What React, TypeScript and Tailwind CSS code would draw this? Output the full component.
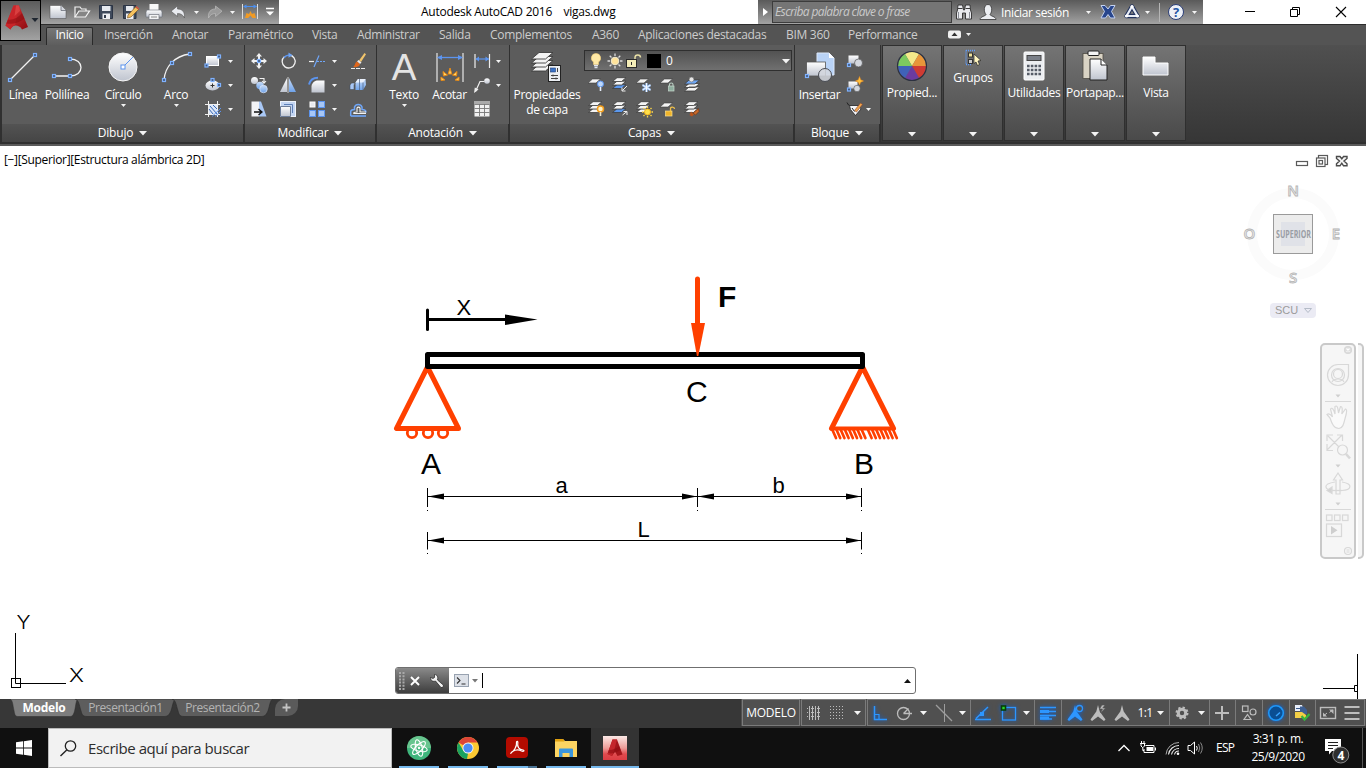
import React from 'react';

type P = { children?: React.ReactNode; w?: number; h?: number; cls?: string };

const I = ({ children, w = 16, h = 16, cls = '' }: P) => (
  <svg width={w} height={h} viewBox={`0 0 ${w} ${h}`} fill="none" className={`shrink-0 overflow-visible ${cls}`}>
    {children}
  </svg>
);

const Grip = ({ x, y }: { x: number; y: number }) => (
  <rect x={x - 1.5} y={y - 1.5} width="3" height="3" fill="#40577c" stroke="#7fb2ff" strokeWidth="1.2" />
);

const Down = ({ w = 8, c = '#f4f4f4' }: { w?: number; c?: string }) => (
  <I w={w} h={Math.ceil(w / 2)}>
    <path d={`M0 0H${w}L${w / 2} ${w / 2 + 0.6}Z`} fill={c} />
  </I>
);

const Defs = () => (
  <svg width="0" height="0" className="absolute">
    <defs>
      <linearGradient id="metal" x1="0" y1="0" x2="0" y2="1">
        <stop offset="0" stopColor="#ffffff" />
        <stop offset="1" stopColor="#bfc4cf" />
      </linearGradient>
      <linearGradient id="ice" x1="0" y1="0" x2="0" y2="1">
        <stop offset="0" stopColor="#c9dcf7" />
        <stop offset="1" stopColor="#6fa3ea" />
      </linearGradient>
      <linearGradient id="ruby" x1="0" y1="0" x2="1" y2="1">
        <stop offset="0" stopColor="#e63a3d" />
        <stop offset="1" stopColor="#8d0b10" />
      </linearGradient>
      <linearGradient id="rubyTile" x1="0" y1="0" x2="0" y2="1">
        <stop offset="0" stopColor="#fbe9e6" />
        <stop offset="0.5" stopColor="#ee9c98" />
        <stop offset="0.75" stopColor="#e04a4e" />
        <stop offset="1" stopColor="#dc3d43" />
      </linearGradient>
    </defs>
  </svg>
);

/* ---------- title bar ---------- */

const Logo = () => (
  <div className="flex h-[41px] w-[41px] shrink-0 items-start border border-black bg-linear-to-b from-[#5c5c5c] to-[#a2a2a2] pt-[4px] pl-[4px]">
    <I w={34} h={28}>
      <path d="M8.500 .500H14L23 22L17 24.500C15.500 21.500 13 20.500 10.500 20.500C8 20.500 6.500 22.500 5.500 24.500L.500 20.500Z" fill="url(#ruby)" />
      <path d="M8.500 .500L.500 20.500L5.500 24.500C6.500 22 8 20.500 10 20.500L14 .500Z" fill="#c9252a" />
      <path d="M3 14.500C8 15.500 14 12 17 8L19.500 13.500C14.500 18 7 19.500 1.500 18.500Z" fill="#86090e" opacity=".5" />
      <path d="M11 .500L9.500 11L15 6L14 .500Z" fill="#f0605c" opacity=".45" />
      <path d="M26.500 13H33.500L30 17Z" fill="#1f2630" />
    </I>
  </div>
);

const QuickAccess = () => (
  <div className="flex h-[24px] w-[238px] shrink-0 items-center bg-linear-to-b from-[#5a5a5a] to-[#a3a3a3] pl-[9px]">
    <div className="flex w-[24px]"><I><path d="M0 1.500H11L16 6.500V14.500H0Z" fill="url(#metal)" stroke="#4a4a4a" strokeWidth=".5" /><path d="M11 1.500V6.500H16" fill="#d5d8df" stroke="#6b6f78" strokeWidth=".8" /></I></div>
    <div className="flex w-[25px]"><I><path d="M1 13V3H6L7.500 5H12V7" stroke="#f0f0f0" strokeWidth="1.200" fill="#6d6d6d" /><path d="M1 13L5 7H15.500L11.500 13Z" stroke="#f4f4f4" strokeWidth="1.200" fill="#858585" /></I></div>
    <div className="flex w-[24px] pb-px"><I cls="-ml-px"><path d="M1.500 1.500H14.500V14.500H1.500Z" fill="#3f4a5c" stroke="#2b3444" /><rect x="4" y="2" width="8.500" height="5" fill="#e6e9ee" /><path d="M4.500 9.500H12V15H4.500Z" fill="#eef0f4" /><rect x="6" y="11" width="2" height="3" fill="#333d4e" /></I></div>
    <div className="flex w-[24px] pb-px"><I><path d="M.500 1.500H13V14.500H.500Z" fill="#3f4a5c" stroke="#2b3444" /><rect x="3" y="2" width="7.500" height="5" fill="#e6e9ee" /><path d="M3 9.500H10.500V15H3Z" fill="#eef0f4" /><path d="M5 11L12.500 3L15.500 5.500L8 13L4.500 14Z" fill="#f6c25e" stroke="#71491d" strokeWidth=".6" /><path d="M12.500 3L13.500 2L16.200 4.500L15.500 5.500Z" fill="#d95241" /></I></div>
    <div className="flex w-[25px]"><I cls="-ml-px"><path d="M3.500 0H12.500V6H3.500Z" fill="#f8f8f8" /><path d="M1 6H15L16 8V13H0V8Z" fill="url(#metal)" stroke="#6a6f78" strokeWidth=".6" /><path d="M3 10.500H13V15.500H3Z" fill="#f2f3f5" stroke="#72767f" strokeWidth=".7" /><path d="M5 13H11" stroke="#888" /></I></div>
    <div className="flex w-[22px]"><I w={14} cls="-ml-px"><path d="M6.500 2V5C11.500 5 14 8 13.500 14C12 11 10 9.500 6.500 9.500V12.500L0 7.200Z" fill="#e8eaef" stroke="#555" strokeWidth=".6" /></I></div>
    <div className="flex w-[15px]"><Down w={5} /></div>
    <div className="flex w-[21px]"><I w={14} cls="-ml-px"><path d="M7.500 2V5C2.500 5 0 8 .500 14C2 11 4 9.500 7.500 9.500V12.500L14 7.200Z" fill="#9a9a9a" stroke="#bcbcbc" strokeWidth=".7" /></I></div>
    <div className="flex w-[14px]"><Down w={5} /></div>
    <div className="flex w-[23px]"><I cls="-ml-[2px]"><path d="M.500 0V15M15.500 0V15" stroke="#dcdcdc" /><path d="M2 2.500H14.500" stroke="#4c8fef" /><path d="M1 2.500L4.500 .500V4.500ZM15 2.500L11.500 .500V4.500Z" fill="#4c8fef" /><path d="M3 14L4.500 9L7 10L8.500 7L10 10L12.500 9L14 14H10.500L8.500 11.500L6 14Z" fill="#f29a22" /></I></div>
    <I w={8} h={10} cls="-ml-px"><path d="M0 1.500H8" stroke="#fff" strokeWidth="1.500" /><path d="M0 4.500H8L4 8.500Z" fill="#fff" /></I>
  </div>
);

const InfoCenter = () => (
  <div className="flex h-[24px] w-[445px] shrink-0 items-center bg-linear-to-b from-[#5a5a5a] to-[#a3a3a3]">
    <div className="flex w-[14px] justify-center"><I w={5} h={8}><path d="M0 0L5 4L0 8Z" fill="#fff" /></I></div>
    <div className="flex h-[22px] w-[180px] items-center border border-[#3c3c3c] bg-[#757575] pl-[2px] text-[12px] tracking-[-0.62px] text-[#c9c9c9] italic">Escriba palabra clave o frase</div>
    <div className="ml-[4px] flex w-[24px]"><I><path d="M2 1H6.500L7.500 6H8.500L9.500 1H14L14.500 6L15.500 9V15H9.500V9H6.500V15H.500V9L1.500 6Z" fill="#e9eaee" stroke="#2e2e2e" strokeWidth=".9" /><path d="M2 4.500H6.500M9.500 4.500H14" stroke="#3b3b3b" /><path d="M2.500 8V14M13.500 8V14" stroke="#8a8d96" /></I></div>
    <div className="flex w-[21px]"><I><path d="M0 15.500C0 12.500 6 12 6 10.500C3.500 8 3.500 0.500 8 .500S12.500 8 10 10.500C10 12 16 12.500 16 15.500Z" fill="#eceef2" stroke="#333" strokeWidth=".8" /></I></div>
    <div className="w-[85px] pt-[2px] text-[12px] tracking-[-0.36px] whitespace-nowrap text-white">Iniciar sesión</div>
    <div className="flex w-[14px]"><Down w={5} /></div>
    <div className="flex w-[24px]"><I><path d="M1 1.500H5L8 5L10.500 1.500H15L11.500 7.500L15 14H10.500L8 10.500L5.500 14H1L4.500 7.500Z" fill="#28468d" stroke="#c4d2f0" strokeWidth="1" /></I></div>
    <div className="flex w-[21px]"><I><path d="M8 2.500L2.500 12H13.500Z" fill="none" stroke="#24345f" strokeWidth="4.400" strokeLinejoin="round" /><path d="M8 2.500L2.500 12H13.500Z" stroke="#e8edf7" strokeWidth="2.200" strokeLinejoin="round" /><circle cx="8" cy="2.500" r="1.600" fill="#fff" /><circle cx="2.500" cy="12" r="1.600" fill="#fff" /><circle cx="13.500" cy="12" r="1.600" fill="#fff" /></I></div>
    <div className="flex w-[14px]"><Down w={5} /></div>
    <div className="h-[19px] w-[9px] border-l border-[#b5b5b5]" />
    <div className="flex h-[16px] w-[16px] items-center justify-center rounded-full border border-[#2c3f78] bg-[#eef1f7] text-[13px] leading-none font-bold text-[#2555a5]">?</div>
    <div className="ml-[8px] flex"><Down w={5} /></div>
  </div>
);

const WindowControls = () => (
  <div className="flex flex-1 items-center bg-white pl-[42px]">
    <div className="flex w-[45px]"><I w={10} h={10}><path d="M0 4.500H10" stroke="#000" /></I></div>
    <div className="flex w-[46px]"><I w={10} h={10}><path d="M.500 2.500H7.500V9.500H.500ZM2.500 2.500V.500H9.500V7.500H7.500" stroke="#000" /></I></div>
    <I w={10} h={10}><path d="M0 0L10 10M10 0L0 10" stroke="#000" strokeWidth="1.100" /></I>
  </div>
);

const TabLabel = ({ children, cls }: { children: string; cls: string }) => (
  <div className={`shrink-0 whitespace-nowrap ${cls}`}>{children}</div>
);

const Tabs = () => (
  <div className="flex h-[21px] items-end border-t border-[#2c2c2c] bg-[#545454] pl-[5px] text-[12px] leading-[17px] tracking-[-0.3px] text-[#cdcdcd]">
    <div className="flex h-[18px] w-[47px] shrink-0 items-center justify-center rounded-t-[2px] border border-b-0 border-[#2a2a2a] bg-linear-to-b from-[#777] to-[#5e5e5e] pb-[4px] text-white">Inicio</div>
    <div className="flex items-center pb-[2px] pl-[11px]">
      <TabLabel cls="w-[68px]">Inserción</TabLabel>
      <TabLabel cls="w-[56px]">Anotar</TabLabel>
      <TabLabel cls="w-[84px]">Paramétrico</TabLabel>
      <TabLabel cls="w-[45px]">Vista</TabLabel>
      <TabLabel cls="w-[82px]">Administrar</TabLabel>
      <TabLabel cls="w-[51px]">Salida</TabLabel>
      <TabLabel cls="w-[102px]">Complementos</TabLabel>
      <TabLabel cls="w-[46px]">A360</TabLabel>
      <TabLabel cls="w-[148px]">Aplicaciones destacadas</TabLabel>
      <TabLabel cls="w-[62px]">BIM 360</TabLabel>
      <TabLabel cls="w-[99px]">Performance</TabLabel>
      <I w={24} h={9}><rect x="1" y=".500" width="13" height="8" rx="2" fill="#f0f0f0" /><path d="M4.500 6L7.500 2.500L10.500 6Z" fill="#333" /><path d="M19 3H24L21.500 6Z" fill="#f0f0f0" /></I>
    </div>
  </div>
);

/* ---------- ribbon ---------- */

const Panel = ({ title, cls, children }: { title: string; cls: string; children: React.ReactNode }) => (
  <div className={`flex h-[97px] shrink-0 flex-col border-r border-[#303030] ${cls}`}>
    <div className="flex h-[79px] bg-[#5c5c5c]">{children}</div>
    <div className="mr-px flex h-[18px] items-center justify-center gap-[6px] bg-linear-to-b from-[#535353] to-[#454545] pb-px text-[12px] tracking-[-0.2px] text-white">
      {title}
      <Down />
    </div>
  </div>
);

const Big = ({ label, cls, arrow, icon }: { label: React.ReactNode; cls: string; arrow?: boolean; icon: React.ReactNode }) => (
  <div className={`flex shrink-0 flex-col items-center pt-[6px] text-center text-[12px] leading-[15px] tracking-[-0.3px] whitespace-nowrap text-white ${cls}`}>
    {icon}
    <div className="mt-[4px] mb-[2px]">{label}</div>
    {arrow && <Down w={5} />}
  </div>
);

const Row = ({ children, arrow }: { children: React.ReactNode; arrow?: string }) => (
  <div className="flex h-[24px] items-center">
    {children}
    {arrow && <div className={`flex ${arrow}`}><Down w={5} /></div>}
  </div>
);

const Dibujo = () => (
  <Panel title="Dibujo" cls="w-[243px]">
    <Big cls="w-[42px]" label="Línea" icon={<I w={32} h={32}><path d="M3 29L28 4" stroke="#f2f2f2" strokeWidth="1.200" /><Grip x={3} y={29} /><Grip x={28} y={4} /></I>} />
    <Big cls="w-[46px]" label="Polilínea" icon={<I w={32} h={32}><path d="M3 25H19C26 25 30 21 30 16.500S26 8 19 8" stroke="#f2f2f2" strokeWidth="1.300" /><Grip x={3} y={25} /><Grip x={19} y={25} /><Grip x={19} y={8} /></I>} />
    <Big cls="w-[66px]" arrow label="Círculo" icon={<I w={32} h={32}><circle cx="16" cy="16" r="14" fill="url(#metal)" stroke="#f7f7f7" /><path d="M16 16L26 6" stroke="#5c94ee" /><rect x="14" y="14" width="4" height="4" fill="#fff" stroke="#5c94ee" /></I>} />
    <Big cls="w-[40px]" arrow label="Arco" icon={<I w={32} h={32}><path d="M4 29C5 16 14 5 30 3" stroke="#f2f2f2" strokeWidth="1.300" /><Grip x={4} y={29} /><Grip x={12} y={12} /><Grip x={30} y={3} /></I>} />
    <div className="ml-[9px] pt-[4px]">
      <Row arrow="ml-[7px]"><I><rect x="1.500" y="3.500" width="12" height="9" fill="url(#metal)" stroke="#fff" /><Grip x={1.5} y={12.5} /><Grip x={14} y={3.5} /></I></Row>
      <Row arrow="ml-[7px]"><I><ellipse cx="7.500" cy="8.500" rx="7" ry="5" fill="url(#metal)" /><path d="M5.500 8.500H9.500M7.500 6.500V10.500" stroke="#333" /><Grip x={7.5} y={3} /><Grip x={14} y={8} /></I></Row>
      <Row arrow="ml-[7px]"><I><path d="M0 3.500H15M0 13.500H15M3.500 0V16M12.500 0V16" stroke="#f0f0f0" /><rect x="4" y="4" width="8" height="9" fill="#dbe6f8" /><path d="M4 8L8 13M5 5L12 13M8 4L12 8" stroke="#3a69b4" /><path d="M7 15.500L16 7M10 15.500L16 10" stroke="#5c94ee" /></I></Row>
    </div>
  </Panel>
);

const Modificar = () => (
  <Panel title="Modificar" cls="w-[132px]">
    <div className="ml-[6px] w-[29px] pt-[4px]">
      <Row><I><path d="M8 0L11 3.500H9V6H7V3.500H5ZM8 16L5 12.500H7V10H9V12.500H11ZM0 8L3.500 5V7H6V9H3.500V11ZM16 8L12.500 11V9H10V7H12.500V5Z" fill="#f2f2f2" /><Grip x={8} y={8} /></I></Row>
      <Row><I><circle cx="3.500" cy="3.500" r="3.500" fill="url(#metal)" /><circle cx="9" cy="8.500" r="3.700" fill="url(#ice)" /><circle cx="12.500" cy="12" r="3.800" fill="url(#ice)" stroke="#dce8fa" strokeWidth=".7" /><path d="M8.500 1.500H13V5M11 4L13 6.200L15 4" stroke="#f2f2f2" strokeWidth="1.100" /></I></Row>
      <Row><I><path d="M.500 .500H8V15.500H.500Z" fill="#f2f3f6" /><path d="M8 .500H10L15.500 15.500H8Z" fill="#a9c8f6" /><path d="M3 11H10M7.500 8L11 11L7.500 14" stroke="#111" strokeWidth="1.300" /></I></Row>
    </div>
    <div className="w-[29px] pt-[4px]">
      <Row><I><path d="M4.500 3.500A6.500 6.500 0 1 0 9 2" stroke="#f0f0f0" strokeWidth="1.300" /><path d="M4 5A6 6 0 0 1 9 2.200" stroke="#5c94ee" strokeWidth="1.300" /><path d="M8.500 -.500L12.500 2.200L8.500 4.800Z" fill="#6fa6f8" /></I></Row>
      <Row><I><path d="M7 1V15H0Z" fill="url(#metal)" /><path d="M9 1V15H16Z" fill="url(#ice)" /><path d="M8 0V16" stroke="#eee" strokeWidth=".8" /></I></Row>
      <Row><I><rect x=".500" y=".500" width="15" height="15" fill="#c3d5f2" stroke="#eef3fb" /><path d="M.500 5.500H10.500V15.500H.500Z" fill="url(#metal)" stroke="#6d7d98" /><path d="M4 3.500H12.500V12" stroke="#5c7fb8" strokeWidth="1" /></I></Row>
    </div>
    <div className="w-[41px] pt-[4px]">
      <Row arrow="ml-[7px]"><I><path d="M0 8.500H5" stroke="#f0f0f0" strokeWidth="1.200" /><path d="M8 8.500H10M11 8.500H13M14 8.500H16" stroke="#6fa6f8" strokeWidth="1.200" /><path d="M10 2.500L5 14" stroke="#6fa6f8" strokeWidth="1.200" /></I></Row>
      <Row arrow="ml-[7px]"><I><path d="M2.500 15.500V9C3.500 5 6 3.500 9 3.500H15.500V15.500Z" fill="url(#metal)" /><path d="M0 7.500C1 3.500 4 .800 9 .800" stroke="#5c94ee" strokeWidth="2" /></I></Row>
      <Row arrow="ml-[7px]"><I><rect x="1" y="1" width="5" height="5" fill="#e9ebf0" stroke="#fff" /><rect x="9.500" y=".500" width="6" height="6" fill="#a7c6f5" stroke="#5c94ee" /><rect x=".500" y="9.500" width="6" height="6" fill="#a7c6f5" stroke="#5c94ee" /><rect x="9.500" y="9.500" width="6" height="6" fill="#a7c6f5" stroke="#5c94ee" /></I></Row>
    </div>
    <div className="pt-[4px]">
      <Row><I><path d="M9 7.500L14.500 0L16 1.200L11 9Z" fill="#f1c46b" /><path d="M8.500 7L11.500 9.500L10 11L7 8.500Z" fill="#e9e9e9" /><path d="M7 8.500L10 11.200C9 14 6 14.500 3 14C5.500 12.500 4.500 10 7 8.500Z" fill="#e0671c" /><path d="M1 15.500H15.500" stroke="#eee" strokeDasharray="4 1" /></I></Row>
      <Row><I><path d="M5.500 5.500L8 2H15.500L16 8L13 13H5.500Z" fill="url(#ice)" /><path d="M8 2H15.500L13 5.500H5.500Z" fill="#eaf1fc" /><path d="M9.500 2V13.500M13 5.500V13M0 8H4V12.500H0Z" stroke="#4a5e80" strokeWidth=".7" /><path d="M0 8L1.500 6H5L4 8V12.500H0Z" fill="#a8c8f7" stroke="#444" strokeWidth=".5" /></I></Row>
      <Row><I><path d="M.700 15V11C.700 9.500 2 8.500 4.500 8.500V6A4 4 0 0 1 12 6V8.500C15 8.500 16 10 16 11.500" stroke="#6fa6f8" strokeWidth="1.500" /><path d="M.700 15H16" stroke="#6fa6f8" strokeWidth="1.600" /><path d="M3.500 12.500H16M3.500 12.500C3.500 11.200 5 11 7 11V7A1.700 1.700 0 0 1 10 7V11H16" stroke="#f2f2f2" strokeWidth="1.100" /></I></Row>
    </div>
  </Panel>
);

const Anotacion = () => (
  <Panel title="Anotación" cls="w-[133px]">
    <Big cls="w-[54px]" arrow label="Texto" icon={<div className="flex h-[32px] items-center pt-px font-['Liberation_Sans'] text-[37px] leading-[32px] tracking-normal text-[#e4e4e4]">A</div>} />
    <Big cls="w-[37px]" label="Acotar" icon={<I w={32} h={32}><path d="M3 2V31M29 2V31" stroke="#e6e6e6" strokeWidth="1.200" /><path d="M4 6.500H28" stroke="#5c94ee" strokeWidth="1.300" /><path d="M3 6.500L8 4V9ZM29 6.500L24 4V9Z" fill="#5c94ee" /><path d="M7 26L11 29L7 29.500ZM9 20.500L13.500 24L9.500 25ZM16 17L17.800 23H14.200ZM23 20.500L22.500 25L18.500 24ZM25 26V29.500L21 29Z" fill="#ffd46b" stroke="#e88a14" strokeWidth="1" /></I>} />
    <div className="ml-[6px] pt-[4px]">
      <Row arrow="ml-[6px]"><I><path d="M1 1V15M15.500 1V15" stroke="#eee" strokeWidth="1.200" /><path d="M2 6H15" stroke="#5c94ee" strokeWidth="1.200" /><path d="M1.500 6L5 3.500V8.500ZM15 6L11.500 3.500V8.500Z" fill="#5c94ee" /></I></Row>
      <Row arrow="ml-[6px]"><I><path d="M1.500 14.500L6 4.500H10.500" stroke="#eee" strokeWidth="1.200" /><path d="M0 16L.800 10.500L4.500 12.500Z" fill="#eee" /><circle cx="13" cy="4" r="2.800" fill="url(#metal)" /></I></Row>
      <Row><I><rect x=".500" y="0" width="15" height="15.500" fill="#f1f1f1" /><rect x=".500" y="0" width="15" height="3" fill="#aaa" /><path d="M.500 3.500H15.500M.500 7.500H15.500M.500 11.500H15.500M5.500 3V15M10.500 3V15" stroke="#777" strokeWidth=".9" /></I></Row>
    </div>
  </Panel>
);

const Sheets = ({ blue }: { blue?: number }) => (
  <>
    {[11.5, 8, 4.5].map((y, i) => (
      <path key={y} d={`M.5 ${y}L5 ${y - 3.8}H14L9.500 ${y}Z`} fill={blue === i ? '#5b98ee' : '#f4f4f4'} stroke="#3d3d3d" strokeWidth=".8" />
    ))}
  </>
);
const One = () => <path d="M0 6L4.500 2H12.500L8 6Z" fill="#f4f4f4" stroke="#3d3d3d" strokeWidth=".6" />;

const Capas = () => (
  <Panel title="Capas" cls="w-[285px]">
    <Big cls="w-[74px]" label={<>Propiedades<br />de capa</>} icon={<I w={32} h={32}>
      {[20, 16, 12, 8].map((y) => <path key={y} d={`M.5 ${y}L8 ${y - 6.5}H22L14.500 ${y}Z`} fill="#f4f4f4" stroke="#3d3d3d" strokeWidth=".9" />)}
      <rect x="17.500" y="14.500" width="12" height="16" fill="#eceff3" stroke="#222" /><rect x="19.500" y="17" width="5" height="4" fill="#3a73c8" stroke="#1e3f78" strokeWidth=".6" /><path d="M26.500 17V21M20 24.500H27M20 27.500H27" stroke="#444" /><path d="M22 23.500V25.500M25 26.500V28.500" stroke="#444" />
    </I>} />
    <div className="pt-[5px]">
      <div className="flex h-[21px] w-[208px] items-center border border-[#2f2f2f] bg-linear-to-b from-[#525252] to-[#707070] pl-[3px] text-[12px] text-white">
        <I><path d="M8 .500A4.600 4.600 0 0 1 10.500 9V11.500H5.500V9A4.600 4.600 0 0 1 8 .500Z" fill="#ffe9a6" stroke="#f7d277" strokeWidth=".6" /><path d="M6 12.500H10M6.500 14.500H9.500" stroke="#dfe4ee" strokeWidth="1.500" /></I>
        <I cls="ml-[3px]"><circle cx="8" cy="8" r="3.800" fill="#ffe39a" stroke="#f0ead0" /><path d="M8 .500V3M8 13V15.500M.500 8H3M13 8H15.500M2.700 2.700L4.500 4.500M11.500 11.500L13.300 13.300M13.300 2.700L11.500 4.500M4.500 11.500L2.700 13.300" stroke="#ddd" strokeWidth="1.300" /></I>
        <I cls="ml-[3px]"><path d="M9 7V4.500C9 1 14.500 1 14.500 4.500" stroke="#e8dfa5" strokeWidth="1.500" /><rect x="0.500" y="6.500" width="10" height="8" fill="#f4edb8" stroke="#2b2b2b" /><path d="M5.500 9V12" stroke="#2b2b2b" /></I>
        <div className="ml-[5px] h-[14px] w-[14px] bg-black" />
        <div className="ml-[5px] w-[116px]">0</div>
        <Down />
      </div>
      <div className="flex gap-[8px] pt-[6px] pl-[4px]">
        <I><One /><circle cx="12.500" cy="7" r="3" fill="#bcd7fb" stroke="#5c94ee" /><path d="M12.500 10V14" stroke="#e6eefb" strokeWidth="1.600" /></I>
        <I><Sheets blue={0} /><path d="M15 9L10.500 13.500M10 10.500V14H13.500" stroke="#eee" /></I>
        <I><One /><path d="M10.500 6V15M6.500 8L14.500 13M14.500 8L6.500 13" stroke="#9cc4fb" strokeWidth="2.200" /><path d="M10.500 6V15M6.500 8L14.500 13M14.500 8L6.500 13" stroke="#f6faff" strokeWidth="1" /></I>
        <I><One /><rect x="8.500" y="9" width="5.500" height="5" fill="#8fae9f" stroke="#c8d9cf" strokeWidth=".7" /><path d="M9.500 9V7.500C9.500 5.500 13 5.500 13 7.500V9" stroke="#b9cdc2" strokeWidth="1.100" /></I>
        <I><path d="M.500 14L5 10H15.500L11 14ZM.500 10.500L5 6.500H15.500L11 10.500Z" fill="#f4f4f4" stroke="#3d3d3d" strokeWidth=".8" /><path d="M.500 7L5 3H15.500L11 7Z" fill="#6fa6f2" stroke="#3d3d3d" strokeWidth=".8" /><circle cx="7.500" cy="2.500" r="2.400" fill="#e6e6e6" stroke="#666" strokeWidth=".5" /></I>
      </div>
      <div className="flex gap-[8px] pt-[8px] pl-[4px]">
        <I><Sheets /><circle cx="12.500" cy="8" r="3" fill="#fff2c4" stroke="#f29c1c" strokeWidth="1.500" /><path d="M12.500 11V15" stroke="#f2e7c9" strokeWidth="1.600" /></I>
        <I><Sheets blue={0} /><path d="M10.500 14L15 10.500M11.500 10.500H15V14" stroke="#eee" /></I>
        <I><Sheets /><circle cx="11.500" cy="11" r="3" fill="#ffe04a" stroke="#f5b51a" /><path d="M11.500 5.500V7M11.500 15V16.500M6 11H7.500M15.500 11H17M7.500 7L8.500 8M14.500 14L15.500 15M15.500 7L14.500 8M8.500 14L7.500 15" stroke="#ffd94a" strokeWidth="1.300" /></I>
        <I><One /><rect x="5.500" y="10" width="6.500" height="5" fill="#f0b429" stroke="#fbe08c" strokeWidth=".7" /><path d="M10.500 10V7.500C10.500 5.500 14.500 5.500 14.500 8" stroke="#f0c04a" strokeWidth="1.300" /></I>
        <I><Sheets /><path d="M7 10.500L10 13.500L8 15.500L5.500 14Z" fill="#b9541b" /><path d="M9 12L14.500 7.500L15 10.500L11.500 14Z" fill="#c86a2a" stroke="#733210" strokeWidth=".6" /></I>
      </div>
    </div>
  </Panel>
);

const Bloque = () => (
  <Panel title="Bloque" cls="w-[86px]">
    <Big cls="w-[49px]" label="Insertar" icon={<I w={32} h={32}><path d="M13 2H25L30 7V24H13Z" fill="#b9d3f7" stroke="#dce8fa" /><path d="M25 2V7H30" fill="#fff" /><rect x="2.500" y="11" width="19" height="14" fill="url(#metal)" stroke="#555" strokeWidth=".8" /><circle cx="21" cy="24" r="6.500" fill="#d3d7de" fillOpacity=".85" stroke="#4a4d55" /><Grip x={3} y={25} /></I>} />
    <div className="ml-[3px] pt-[4px]">
      <Row><I><rect x="1.500" y="2.500" width="10" height="8" fill="url(#metal)" /><circle cx="11.500" cy="10" r="4" fill="#d3d7de" stroke="#555" strokeWidth=".7" /><Grip x={2} y={12} /></I></Row>
      <Row><I><rect x="1.500" y="4.500" width="9" height="7" fill="url(#metal)" /><circle cx="10" cy="11.500" r="3.200" fill="#d3d7de" stroke="#555" strokeWidth=".6" /><path d="M12.500 -.500L13.700 2.800L16.500 4L13.700 5.200L12.500 8L11.300 5.200L8.500 4L11.300 2.800Z" fill="#ffc13d" stroke="#f08a1d" strokeWidth=".5" /><Grip x={2} y={12.5} /></I></Row>
      <Row arrow="ml-[3px]"><I><path d="M0 1.500L1.500 4L4 5" stroke="#222" /><path d="M2.500 4.500H12L14 8L8.500 14.500L3.500 8.500Z" fill="#f4f5f8" stroke="#222" strokeWidth=".8" /><path d="M7.500 9.500L13.500 2L15.500 3.500L9.500 11Z" fill="#f0a44a" stroke="#843" strokeWidth=".6" /><path d="M5 7L7.500 10.500" stroke="#222" /></I></Row>
    </div>
  </Panel>
);

const Card = ({ label, small, children }: { label: string; small?: boolean; children: React.ReactNode }) => (
  <div className="flex h-[96px] w-[60px] shrink-0 flex-col items-center overflow-hidden border border-[#2f2f2f] bg-linear-to-b from-[#747474] to-[#4a4a4a] pt-[4px] text-[12px] tracking-[-0.3px] whitespace-nowrap text-white">
    <div className={small ? 'flex h-[17px]' : 'flex h-[32px]'}>{children}</div>
    <div className="mt-[2px] flex-1">{label}</div>
    <div className="pb-[4px]"><Down /></div>
  </div>
);

const wheel = ['#f4e98a', '#e8963a', '#cf3b33', '#6b3ba0', '#3f62b8', '#7cc95f'];
const wedge = (i: number) => {
  const a = ((i * 60 - 120) * Math.PI) / 180;
  const b = ((i * 60 - 60) * Math.PI) / 180;
  return `M16 16L${16 + 14 * Math.cos(a)} ${16 + 14 * Math.sin(a)}A14 14 0 0 1 ${16 + 14 * Math.cos(b)} ${16 + 14 * Math.sin(b)}Z`;
};

const Cards = () => (
  <div className="flex h-[97px] flex-1 gap-px bg-linear-to-b from-[#505050] to-[#363636] pl-px">
    <Card label="Propied..."><I w={32} h={32}>{wheel.map((c, i) => <path key={c} d={wedge(i)} fill={c} />)}<circle cx="16" cy="16" r="14.500" stroke="#2c3140" strokeWidth="1.200" /></I></Card>
    <Card small label="Grupos"><I><path d="M1 .500H10M1 .500V14M1 14.500H7" stroke="#5c9cff" strokeDasharray="1 1" strokeWidth="1.300" /><rect x="3.500" y="3" width="4" height="4" fill="#efe19a" stroke="#333" /><rect x="3.500" y="9.500" width="4" height="4" fill="#ccc" stroke="#333" /><path d="M9 4L16 10.500L13 11L14.500 14.500L12.500 15.500L11 12L9 13.500Z" fill="#fff5c0" stroke="#222" strokeWidth=".7" /></I></Card>
    <Card label="Utilidades"><I w={32} h={32}><rect x="6" y="2" width="20" height="28" rx="1" fill="#eceef1" stroke="#fff" /><rect x="9" y="5.500" width="14" height="5" fill="#7a7f88" stroke="#444" /><path d="M9 16H23M9 20H23M9 24H23" stroke="#555b66" strokeWidth="2.600" strokeDasharray="2.600 1.200" /></I></Card>
    <Card label="Portapap..."><I w={32} h={32}><rect x="4" y="3.500" width="20" height="25" fill="#d9d3c4" stroke="#4e4a42" strokeWidth=".8" /><rect x="9" y="1" width="11" height="4.500" rx="1" fill="#f4f4f4" stroke="#222" /><path d="M11 9H22L28 15V30H11Z" fill="url(#metal)" stroke="#222" /><path d="M22 9V15H28" fill="#fff" stroke="#222" /></I></Card>
    <Card label="Vista"><I w={32} h={32}><path d="M3 7H15V13H28V25H3Z" fill="url(#metal)" stroke="#fff" /></I></Card>
  </div>
);

/* ---------- drawing area ---------- */

const RED = '#ff4000';

const Diagram = () => (
  <svg className="absolute top-0 left-0" width="1366" height="553" viewBox="0 146 1366 553" fill="none">
    <path d="M427.500 310V329.500" stroke="#000" strokeWidth="3" strokeLinecap="round" />
    <path d="M427.500 319.500H506" stroke="#000" strokeWidth="3" />
    <path d="M505 314.500V325L537.500 319.500Z" fill="#000" />
    <path d="M427.500 367L396.500 428.500H458.500Z" stroke={RED} strokeWidth="5" strokeLinejoin="round" />
    {[412, 428, 443].map((x) => <circle key={x} cx={x} cy="433" r="4.700" stroke={RED} strokeWidth="2.800" />)}
    <path d="M862.500 367L831.500 428.500M862.500 367L893.500 428.500" stroke={RED} strokeWidth="5" strokeLinecap="round" />
    <path d="M831.500 428.500H894" stroke={RED} strokeWidth="4" />
    {Array.from({ length: 15 }, (_, i) => {
      const x = 832 + i * 4.2 + (i > 7 ? 2 : 0);
      return <path key={i} d={`M${x} 429L${x + 4} 438`} stroke={RED} strokeWidth="2.700" strokeLinecap="round" />;
    })}
    <path d="M427.500 366.500V354.500H862.500V366.500Z" stroke="#000" strokeWidth="5" strokeLinejoin="round" />
    <path d="M697.500 279V325" stroke={RED} strokeWidth="5" strokeLinecap="round" />
    <path d="M691 323H705L698.300 356H696.900Z" fill={RED} />
    <g stroke="#000" strokeWidth="1">
      <path d="M427.500 496.500H862M427.500 540.500H862" />
      <path d="M427.500 488V507M697.500 488V507M861.500 488V507M427.500 532V549.500M861.500 532V549.500" />
      <path d="M427.500 510V511M697.500 510V511M861.500 510V511M427.500 553V554M861.500 553V554" />
    </g>
    <path d="M428 496.500L444 493.500V499.500ZM697 496.500L682 493.500V499.500ZM698 496.500L714 493.500V499.500ZM861 496.500L846 493.500V499.500ZM428 540.500L444 537.500V543.500ZM861 540.500L846 537.500V543.500Z" fill="#000" />
    <g fill="#000" fontFamily="Liberation Sans, sans-serif" fontSize="30">
      <text x="718" y="307" fontWeight="700">F</text>
      <text x="686" y="402">C</text>
      <text x="421" y="474">A</text>
      <text x="854" y="474">B</text>
      <g fontSize="22">
        <text x="456.500" y="315">X</text>
        <text x="555.500" y="493">a</text>
        <text x="772.500" y="493">b</text>
        <text x="637.500" y="537">L</text>
      </g>
    </g>
    <g stroke="#000">
      <rect x="11.500" y="678.500" width="9" height="9" />
      <path d="M15.500 633V683.500H66" />
      <path d="M1357.500 654V699M1323 688.500H1354M1357 685.500H1354.500V691.500H1357" />
    </g>
    <g fill="#000" fontFamily="Inter, sans-serif" fontSize="18" fontWeight="300">
      <text x="16.500" y="629" textLength="14" lengthAdjust="spacingAndGlyphs">Y</text>
      <text x="69" y="682" textLength="15" lengthAdjust="spacingAndGlyphs">X</text>
    </g>
    <circle cx="1293" cy="234" r="41" stroke="#fbfbfb" strokeWidth="10" />
    <g fontFamily="Open Sans, sans-serif" fontWeight="600" fontSize="15" fill="#ebebeb" stroke="#b4b4b4" strokeWidth=".8" textAnchor="middle">
      <text x="1293" y="196">N</text><text x="1249.500" y="239">O</text><text x="1336" y="239">E</text><text x="1293" y="283">S</text>
    </g>
    <rect x="1273.500" y="214.500" width="39" height="39" fill="#ececec" stroke="#9a9a9a" />
    <rect x="1281" y="222" width="24" height="24" fill="#e0e2e8" />
    <text x="1276" y="238" fontFamily="Open Sans, sans-serif" fontWeight="700" fontSize="10" fill="#9a9ea5" textLength="35" lengthAdjust="spacingAndGlyphs">SUPERIOR</text>
    <g stroke="#5a5a5a" strokeWidth="1.200" fill="#fff">
      <rect x="1296.500" y="161.500" width="11" height="4" />
      <rect x="1318.500" y="155.500" width="9" height="9" /><rect x="1316.500" y="158" width="8.500" height="8.500" /><rect x="1319" y="160.500" width="3.500" height="3.500" />
    </g>
    <path d="M1336.500 156.500H1340L1341.800 158.800L1343.500 156.500H1347V158.500L1344 161L1347 163.800V165.800H1343.500L1341.800 163.200L1340 165.800H1336.500V163.800L1339.500 161L1336.500 158.500Z" fill="#f5f5f5" stroke="#4a4a4a" strokeWidth="1.400" />
  </svg>
);

const NavBar = () => (
  <div className="absolute top-[197px] left-[1320px] flex gap-[2px]">
    <div className="h-[216px] w-[36px] rounded-[5px] border-2 border-[#c9c9c9] bg-[#f6f6f6]">
      <I w={32} h={212}>
        <g stroke="#d8d8d8" strokeWidth="1.200">
          <circle cx="26" cy="5" r="3.500" fill="#ddd" /><path d="M24.500 3.500L27.500 6.500M27.500 3.500L24.500 6.500" stroke="#fff" />
          <path d="M16 19.500H26.500V30A10.500 10.500 0 1 1 16 19.500Z" /><circle cx="16" cy="30" r="6.500" /><path d="M10 37C12 33 20 33 22 37" /><circle cx="16" cy="29" r="4.500" />
          <path d="M3 56.500H29M3 164.500H29" />
          <path d="M8 73L5 69.500C7 68 9 70 10.500 72L8.500 64C10 62 11.500 64 13 69L13 61.500C15 60 16 62 16.500 68L18.500 61.500C20.500 61.500 20.500 64 19.800 69L23.500 64C25.500 64.500 24.500 67 24 70C22 76 22 83 17 83.500C12 83.500 10 79 8 73Z" fill="#fafafa" />
          <path d="M6 91L19 104M20 90L5 105M5 96V90H11M15 90H20.500V96M5 99V105.500H11" /><circle cx="20.500" cy="105" r="5" fill="#f6f6f6" /><path d="M24 109L28 113.500" strokeWidth="2.600" />
          <path d="M13 137C0 139 2 145 12 145.500M20 137C32 139 29 145 20 145.500" /><path d="M14 149V135H11.500L16 128L20.500 135H18V149Z" fill="#f6f6f6" /><path d="M10 142L5 145.500L10 148.500Z" fill="#d3d3d3" /><path d="M9 145.500H20" />
          <rect x="4.500" y="170" width="5.500" height="5.500" /><rect x="12.500" y="170" width="5.500" height="5.500" /><rect x="20.500" y="170" width="5.500" height="5.500" />
          <rect x="4.500" y="179" width="15" height="12.500" /><circle cx="26" cy="206" r="3.500" /><path d="M24.500 205H27.500M24.500 207H27.500" />
        </g>
        <path d="M13.500 49.500H18.500L16 52.500ZM13.500 119.500H18.500L16 122.500ZM13.500 157.500H18.500L16 160.500ZM9 181V189.500L15.500 185.200Z" fill="#cfcfcf" />
      </I>
    </div>
    <div className="h-[216px] w-[6px] rounded-r-[5px] border-2 border-l-0 border-[#c9c9c9] bg-[#f6f6f6]" />
  </div>
);

const CommandLine = () => (
  <div className="absolute top-[521px] left-[395px] flex h-[27px] w-[521px] overflow-hidden rounded-[3px] border border-[#6f6f6f] bg-white">
    <div className="flex w-[53px] items-center bg-linear-to-b from-[#8a8a8a] to-[#3e3e3e] pl-[3px]">
      <I w={6} h={18}><path d="M1 0V18M4.500 0V18" stroke="#aaa" strokeWidth="2" strokeDasharray="2 1.200" /></I>
      <I w={10} h={10} cls="ml-[5px]"><path d="M1 1L9 9M9 1L1 9" stroke="#fff" strokeWidth="1.900" /></I>
      <I w={14} h={14} cls="ml-[10px]"><path d="M4.500 0.500L4.500 3.500L3 4.500L.500 3.500C.300 6.500 3 8 5.500 7L11 13.500C12.500 14 14 12.500 13.300 11L7.500 6C8.500 3 7 .500 4.500 .500Z" fill="#f1f1f1" stroke="#222" strokeWidth=".7" /></I>
    </div>
    <div className="flex flex-1 items-center pl-[5px]">
      <I w={15} h={13}><rect x=".500" y=".500" width="14" height="12" fill="#dde1e8" stroke="#98a2b0" /><path d="M3 3.500L6 6.500L3 9.500M7.500 10H11.500" stroke="#333" strokeWidth="1.100" /></I>
      <div className="ml-[3px] flex"><Down w={6} c="#777" /></div>
      <div className="ml-[4px] h-[15px] w-px bg-black" />
      <div className="flex flex-1 justify-end pr-[4px]"><I w={7} h={4}><path d="M0 4H7L3.500 0Z" fill="#111" /></I></div>
    </div>
  </div>
);

/* ---------- status bar ---------- */

const LayoutTab = ({ label, cls, active }: { label: string; cls: string; active?: boolean }) => (
  <div className={`relative -ml-[4px] flex h-[18px] shrink-0 items-center justify-center text-[12px] ${cls} ${active ? 'font-bold tracking-[-0.25px] text-white' : 'tracking-[-0.4px] text-[#b4b4b4]'}`}>
    <svg className="absolute inset-0 h-full w-full" viewBox="0 0 100 18" preserveAspectRatio="none">
      <path d="M0 0C4 1 4 6 6 12C7 16 8 17.500 12 17.500H88C92 17.500 93 16 95 12C97 6 97 1 100 0Z" fill={active ? '#7d7d7d' : '#5d5d5d'} stroke="#2c2c2c" strokeWidth=".6" />
    </svg>
    <span className="relative">{label}</span>
  </div>
);

const Cell = ({ cls, children }: { cls: string; children: React.ReactNode }) => (
  <div className={`flex shrink-0 items-center justify-center ${cls}`}>{children}</div>
);
const Group = ({ cls, children }: { cls: string; children: React.ReactNode }) => (
  <div className={`flex h-[27px] shrink-0 border-y border-l border-[#7b7b7b] ${cls}`}>{children}</div>
);
const BLUE = '#2d96ff';
const GREY = '#bdbdbd';
const GLOW = 'drop-shadow-[0_0_2px_#0a62d8]';
const Compass = ({ c }: { c: string }) => <path d="M8 0L9.700 6.500L15.500 14.500L14 16L8 11.500L2 16L.500 14.500L6.300 6.500Z" fill={c} />;

const StatusTools = () => (
  <div className="flex h-[27px] w-[625px] shrink-0 bg-[#505050] pl-px text-[12px] text-white">
    <Group cls="w-[58px] border-r"><Cell cls="w-[56px] tracking-[-0.25px]">MODELO</Cell></Group>
    <Group cls="ml-px w-[65px] border-r">
      <Cell cls="w-[24px]"><I><path d="M3.500 1V15M6.500 1V15M9.500 1V15M12.500 1V15" stroke={GREY} /><path d="M1 3.500H15M1 7.500H15M1 11.500H15" stroke={GREY} strokeDasharray="1 1" /></I></Cell>
      <Cell cls="w-[22px]"><I><path d="M1 1.500H15M1 4.500H15M1 7.500H15M1 10.500H15M1 13.500H15" stroke={GREY} strokeDasharray="1 2" /></I></Cell>
      <Cell cls="w-[18px]"><Down w={7} /></Cell>
    </Group>
    <Group cls="ml-px w-[103px]">
      <Cell cls="w-[24px]"><I cls={GLOW}><path d="M2.500 1V14.500H15" stroke={BLUE} strokeWidth="1.500" /><path d="M2.500 9.500H7V14" stroke={BLUE} strokeWidth="1.200" /></I></Cell>
      <Cell cls="w-[23px]"><I><circle cx="7.500" cy="8.500" r="6" stroke={GREY} strokeWidth="1.300" /><path d="M7.500 8.500H16M7.500 8.500L12.500 3.500" stroke={GREY} strokeWidth="1.300" /></I></Cell>
      <Cell cls="w-[17px]"><Down w={7} /></Cell>
      <Cell cls="w-[23px]"><I><path d="M0 0L16 16" stroke="#9d9d9d" strokeWidth="1.300" /><path d="M8.500 -1V17" stroke="#9d9d9d" /></I></Cell>
      <Cell cls="w-[15px]"><Down w={7} /></Cell>
    </Group>
    <Group cls="w-[64px]">
      <Cell cls="w-[24px]"><I cls={GLOW}><path d="M0 14.500H16M1 13.500L13 2" stroke={BLUE} strokeWidth="1.500" /><rect x="5" y="7" width="4" height="4" fill={BLUE} /></I></Cell>
      <Cell cls="w-[25px]"><I cls={GLOW}><rect x="2.500" y="2.500" width="13" height="12.500" stroke={BLUE} strokeWidth="1.300" /><rect x="1.500" y="1" width="4" height="4" fill="#2bd52b" stroke="#063f06" strokeWidth="1.600" /></I></Cell>
      <Cell cls="w-[13px]"><Down w={7} /></Cell>
    </Group>
    <Group cls="w-[27px]"><Cell cls="w-[25px]"><I cls={GLOW}><path d="M0 2.500H16M0 6.500H16M0 10.500H16M0 14H12" stroke={BLUE} strokeWidth="1.500" /><path d="M0 6.500H9M0 13H9" stroke={BLUE} strokeWidth="3" /></I></Cell></Group>
    <Group cls="w-[108px]">
      <Cell cls="w-[25px]"><I cls={GLOW}><Compass c={BLUE} /><circle cx="12.500" cy="3.500" r="3" fill="#505050" stroke={BLUE} strokeWidth="1.300" /></I></Cell>
      <Cell cls="w-[22px]"><I><Compass c={GREY} /><path d="M12 0L9.500 4H12.500L10.500 8L15.500 3H12.800L15 0Z" fill={GREY} stroke="#505050" strokeWidth=".6" /></I></Cell>
      <Cell cls="w-[26px]"><I><Compass c={GREY} /></I></Cell>
      <Cell cls="w-[20px] tracking-[-0.6px]">1:1</Cell>
      <Cell cls="w-[10px]"><Down w={7} /></Cell>
    </Group>
    <Group cls="w-[40px]">
      <Cell cls="w-[24px]"><I><circle cx="8" cy="8" r="3.700" stroke={GREY} strokeWidth="3" /><circle cx="8" cy="8" r="5.500" stroke={GREY} strokeWidth="2" strokeDasharray="2.300 2" /></I></Cell>
      <Cell cls="w-[14px]"><Down w={7} /></Cell>
    </Group>
    <Group cls="w-[26px]"><Cell cls="w-[24px]"><I><path d="M8 1V15M1 8H15" stroke={GREY} strokeWidth="2" /></I></Cell></Group>
    <Group cls="w-[27px]"><Cell cls="w-[25px]"><I><rect x="1.500" y="1" width="5.500" height="5.500" stroke={GREY} strokeWidth="1.200" /><circle cx="12" cy="7" r="3" stroke={GREY} strokeWidth="1.200" /><path d="M6.500 9.500L10 14.500H3Z" stroke={GREY} strokeWidth="1.200" /></I></Cell></Group>
    <Group cls="w-[27px]"><Cell cls="w-[25px]"><I cls={GLOW}><circle cx="8" cy="8" r="7.300" fill="#0a4e93" stroke="#1f97f7" strokeWidth="1.600" /><path d="M8 11L12 7.500" stroke="#3aa4ff" strokeWidth="1.400" /></I></Cell></Group>
    <Group cls="w-[26px]"><Cell cls="w-[24px]"><I><path d="M1 0H8L9 3V6H1Z" fill="#e8eefa" /><path d="M6 1.500H10L13 5V9H6Z" fill="#3d5f92" /><path d="M1 7H8L12 10V13H1Z" fill="#f3cf45" /><path d="M2 3.500H6" stroke="#37588c" /><path d="M7.500 11L10.500 14.500L15.500 9" stroke="#38b43e" strokeWidth="2.200" /></I></Cell></Group>
    <Group cls="w-[50px] border-r">
      <Cell cls="w-[24px]"><I><rect x=".500" y="2.500" width="15" height="11" stroke={GREY} strokeWidth="1.400" /><path d="M9 4.500H13.500V9Z" fill={GREY} /><path d="M3 7.500V11.500H7Z" fill={GREY} /><path d="M4 10.500L7 8M9.500 7.500L12.500 5" stroke={GREY} /></I></Cell>
      <Cell cls="w-[24px]"><I><path d="M0.500 2H15.500M.500 8H15.500M.500 14H15.500" stroke={GREY} strokeWidth="2" /></I></Cell>
    </Group>
  </div>
);

const StatusBar = () => (
  <div className="flex h-[29px] shrink-0 justify-between bg-[#373737]">
    <div className="flex pl-[14px]">
      <LayoutTab label="Modelo" cls="w-[68px]" active />
      <LayoutTab label="Presentación1" cls="ml-[-3px] w-[101px]" />
      <LayoutTab label="Presentación2" cls="w-[101px]" />
      <div className="ml-[2px] flex h-[17px] w-[23px] items-center justify-center rounded-tl-[10px] rounded-br-[10px] bg-[#5a5a5a]"><I w={9} h={9}><path d="M4.500 .500V8.500M.500 4.500H8.500" stroke="#c4c4c4" strokeWidth="1.800" /></I></div>
    </div>
    <StatusTools />
  </div>
);

/* ---------- task bar ---------- */

const Task = ({ cls, line, children }: { cls: string; line: string; children: React.ReactNode }) => (
  <div className={`flex h-[40px] shrink-0 flex-col items-center justify-between pt-[8px] ${cls}`}>
    {children}
    <div className={`h-[2px] bg-[#76b9ed] ${line}`} />
  </div>
);

const TaskBar = () => (
  <div className="flex h-[40px] shrink-0 bg-[#101010]">
    <div className="flex w-[48px] items-center justify-center"><I><path d="M0 2.300L7 1.300V7.600H0ZM7.800 1.200L16 0V7.600H7.800ZM0 8.400H7V14.700L0 13.700ZM7.800 8.400H16V16L7.800 14.800Z" fill="#fff" /></I></div>
    <div className="flex w-[344px] items-center border border-[#bbb] bg-[#f2f2f2] pl-[11px] text-[15px] tracking-[-0.43px] text-[#2d2d2d]">
      <I w={17} h={17}><circle cx="10.500" cy="6" r="5.200" stroke="#222" strokeWidth="1.300" /><path d="M6.700 10L.500 16" stroke="#222" strokeWidth="1.400" /></I>
      <span className="ml-[11px]">Escribe aquí para buscar</span>
    </div>
    <Task cls="ml-[3px] w-[48px]" line="w-[40px]"><I w={24} h={24}><circle cx="12" cy="12" r="12" fill="#3fb57c" /><path d="M0 12A12 12 0 0 1 24 12Z" fill="#8fd6a0" opacity=".5" /><g stroke="#fff" strokeWidth="1.100"><ellipse cx="12" cy="12" rx="8.500" ry="3.200" transform="rotate(15 12 12)" /><ellipse cx="12" cy="12" rx="8.500" ry="3.200" transform="rotate(75 12 12)" /><ellipse cx="12" cy="12" rx="8.500" ry="3.200" transform="rotate(135 12 12)" /></g><circle cx="12" cy="12" r="1.200" fill="#fff" /></I></Task>
    <Task cls="ml-px w-[48px]" line="w-[40px]"><I w={22} h={24}><g transform="translate(0 1)"><circle cx="11" cy="11" r="11" fill="#fbc932" /><path d="M11 11L1.500 5.500A11 11 0 0 1 20.500 5.500H11Z" fill="#dc4437" /><path d="M1.500 5.500L6.500 14L11 16.500L10 22A11 11 0 0 1 1.500 5.500Z" fill="#1aa260" /><circle cx="11" cy="11" r="5.500" fill="#f5f5f5" /><circle cx="11" cy="11" r="4.600" fill="#4a8bf5" /></g></I></Task>
    <div className="ml-px flex h-[40px] w-[48px] flex-col items-center justify-between pt-[8px]">
      <I w={22} h={24}><rect x="0" y="1" width="22" height="21" rx="4" fill="#b30b00" /><path d="M5 17C8 15 11 10.500 10.500 6.500C10.300 5 12.200 5 11.800 7C11 11 13 13.500 17 14C19 14.500 17.500 16 15.500 15C12 13 9 14 6.500 15.500C4.500 17 4.500 18 5 17Z" stroke="#fff" strokeWidth="1.200" /></I>
      <div className="flex h-[2px] w-[40px]"><div className="w-[31px] bg-[#76b9ed]" /><div className="flex-1 bg-[#4a7394]" /></div>
    </div>
    <Task cls="ml-px w-[48px]" line="w-[40px]"><I w={22} h={24}><path d="M0 3H8L10 5H22V21H0Z" fill="#fcd462" /><path d="M0 3H8L9.500 5.500H0Z" fill="#e0a00f" /><path d="M4 21V13.500Q4 12.500 5 12.500H17Q18 12.500 18 13.500V21H14.500V17H7.500V21Z" fill="#3b96dd" /></I></Task>
    <Task cls="ml-px w-[48px] bg-[#333]" line="w-[48px]"><I w={24} h={24}><rect width="24" height="24" fill="url(#rubyTile)" /><path d="M9.500 3.500H14L19.500 18.500L14.500 20L12 15.500L9 20L4.500 18Z" fill="#a3161b" /><path d="M9.500 3.500H14L11 15L9 20L4.500 18Z" fill="#c4262b" /><path d="M6 14C10 14 14 12 16 10L17.500 14C13 17 8 18 5 17Z" fill="#8d0b10" opacity=".6" /></I></Task>
    <div className="flex flex-1 items-center justify-end text-[12px] leading-[18px] text-white">
      <I w={12} h={8}><path d="M.500 7L6 1.500L11.500 7" stroke="#fff" strokeWidth="1.300" /></I>
      <I cls="ml-[10px]"><path d="M5.500 5.500H14V12.500H4V9" stroke="#fff" /><path d="M6.500 7H13V11H6.500Z" fill="#fff" /><path d="M15.500 7.500V10.500M0 3.500H5.500M1.500 1V3M4 1V3M1 4V6L2.500 7.500H3L4.500 6V4M2.800 7.500V10.500H4" stroke="#fff" /></I>
      <I cls="ml-[9px]"><path d="M1 14.500A13 13 0 0 1 14 2.500" stroke="#aaa" /><path d="M3.500 14.500A10.500 10.500 0 0 1 14 5.500M6.500 14.500A7.500 7.500 0 0 1 14 8.500M9.500 14.500A4.500 4.500 0 0 1 14 11" stroke="#eee" strokeWidth="1.100" /><circle cx="13" cy="13.700" r="1.300" fill="#fff" /></I>
      <I cls="ml-[6px]"><path d="M1 5.500H3.500L7.500 2V14L3.500 10.500H1Z" stroke="#fff" /><path d="M9.500 6Q11 8 9.500 10.500" stroke="#fff" /><path d="M11.500 4Q14 8 11.500 12M13.500 2.500Q17 8 13.500 13.500" stroke="#8a8a8a" /></I>
      <div className="ml-[13px] w-[18px] tracking-[-0.7px]">ESP</div>
      <div className="ml-[14px] flex w-[60px] flex-col items-center tracking-[-0.4px] whitespace-nowrap"><span>3:31 p. m.</span><span>25/9/2020</span></div>
      <I w={26} h={26} cls="ml-[17px]"><path d="M0 4H16V16H7L4 19.500V16H0Z" fill="#fff" /><path d="M3 7.500H13M3 10.500H13M3 13.500H8" stroke="#222" /><circle cx="15.800" cy="20" r="8" fill="#2e2e2e" stroke="#8a8a8a" /><text x="12.600" y="24.500" fontSize="12" fontWeight="700" fontFamily="Open Sans, sans-serif" fill="#fff">4</text></I>
      <div className="ml-[11px] h-[40px] w-[4px] border-l border-[#555]" />
    </div>
  </div>
);

export default function App() {
  return (
    <div className="flex h-[768px] w-[1366px] flex-col overflow-hidden bg-white font-['Open_Sans','Noto_Sans',sans-serif]">
      <Defs />
      <header className="flex h-[45px] shrink-0 bg-[#545454]">
        <Logo />
        <div className="flex flex-1 flex-col">
          <div className="flex h-[24px]">
            <QuickAccess />
            <div className="flex w-[479px] shrink-0 items-center bg-white pl-[142px] text-[12px] tracking-[-0.26px] whitespace-pre text-black">{'Autodesk AutoCAD 2016    vigas.dwg'}</div>
            <InfoCenter />
            <WindowControls />
          </div>
          <Tabs />
        </div>
      </header>
      <section className="flex h-[101px] shrink-0 flex-col border-b-2 border-[#5a5a5a] bg-[#303030]">
        <div className="flex h-[97px] pl-[2px]">
          <Dibujo />
          <Modificar />
          <Anotacion />
          <Capas />
          <Bloque />
          <Cards />
        </div>
      </section>
      <main className="relative h-[553px] shrink-0 bg-white">
        <div className="pt-[5px] pl-[4px] text-[12px] leading-[18px] tracking-[-0.34px] text-black">[−][Superior][Estructura alámbrica 2D]</div>
        <Diagram />
        <div className="absolute top-[157px] left-[1270px] flex h-[15px] w-[46px] items-center gap-[6px] rounded-[4px] bg-[#ebebf4] pl-[5px] font-['Liberation_Sans'] text-[11px] text-[#9b9b9b]">
          SCU
          <I w={8} h={5}><path d="M.500 .500H7.500L4 4.500Z" stroke="#b5bcc8" /></I>
        </div>
        <NavBar />
        <CommandLine />
      </main>
      <StatusBar />
      <TaskBar />
    </div>
  );
}
